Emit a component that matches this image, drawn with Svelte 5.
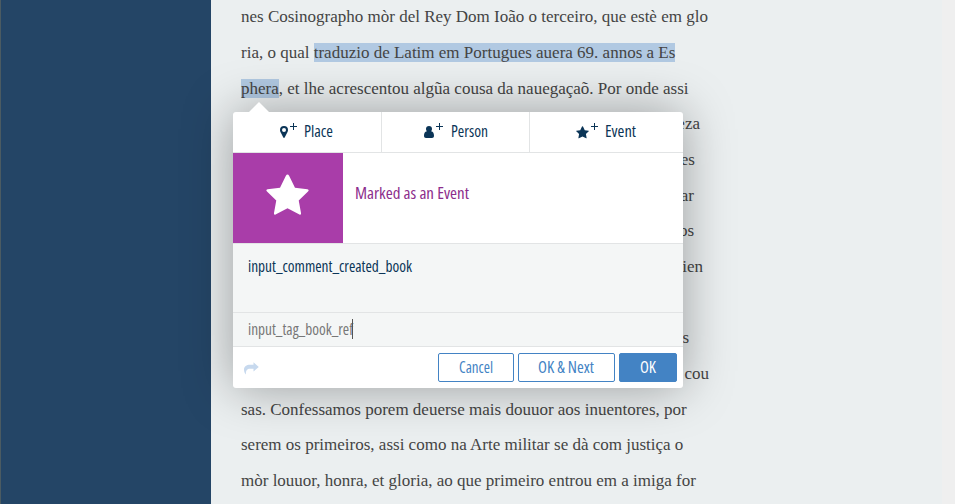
<script>
  const lines = [
    { text: 'nes Cosinographo mòr del Rey Dom Ioão o terceiro, que estè em glo' },
    { text: 'ria, o qual ', mark: 'traduzio de Latim em Portugues auera 69. annos a Es' },
    { mark: 'phera', after: ', et lhe acrescentou algũa cousa da nauegaçaõ. Por onde assi' },
    { end: 'eza', width: 459 },
    { end: 'es', width: 454 },
    { end: 'ar', width: 453 },
    { end: 'os', width: 453 },
    { end: 'ien', width: 462 },
    {},
    { end: 's', width: 448 },
    { end: 'cou', width: 468 },
    { text: 'sas. Confessamos porem deuerse mais douuor aos inuentores, por' },
    { text: 'serem os primeiros, assi como na Arte militar se dà com justiça o' },
    { text: 'mòr louuor, honra, et gloria, ao que primeiro entrou em a imiga for' }
  ];
  const star = 'M12 .3 Q12.500 .3 12.900 1 L16.200 7.700 L23.200 8.600 Q24.400 8.900 23.500 9.800 L18.300 14.900 L19.600 22 Q19.700 23.100 18.700 22.700 L12 19.200 L5.300 22.700 Q4.300 23.100 4.400 22 L5.700 14.900 L.5 9.800 Q-.4 8.900 .8 8.600 L7.800 7.700 L11.100 1 Q11.500 .3 12 .3 Z';
</script>

{#snippet label(text, width, size = 16, cls = '')}
  <svg class="label {cls}" width={width} height="22"><text x="0" y="16.4" font-size={size} textLength={width} lengthAdjust="spacingAndGlyphs">{text}</text></svg>
{/snippet}

{#snippet plus()}
  <svg class="plus" width="7" height="7" viewBox="0 0 7 7"><path d="M3.5 0V7M0 3.5H7" stroke="currentColor" stroke-width="1" /></svg>
{/snippet}

<main>
  <aside></aside>
  <article>
    {#each lines as l}
      <p>
        {#if l.end}<span class="end" style="width:{l.width}px">{l.end}</span>{:else}{l.text ?? ''}{#if l.mark}<mark>{l.mark}</mark>{/if}{l.after ?? ''}{/if}
      </p>
    {/each}
  </article>
  <div class="gutter"></div>

  <section class="popup">
    <svg class="arrow" width="22" height="11" viewBox="0 0 22 11"><path d="M0 11 L11 0 L22 11Z" fill="#fff" /></svg>
    <nav>
      <button class="place">
        <svg width="8" height="12" viewBox="0 0 8 12"><path fill="currentColor" fill-rule="evenodd" d="M4 0a4 4 0 0 1 4 4c0 1.200-.4 1.800-1 3L4.700 11.500a.8.8 0 0 1-1.400 0L1 7C.4 5.800 0 5.200 0 4a4 4 0 0 1 4-4Zm0 2a2 2 0 1 0 0 4a2 2 0 0 0 0-4Z" /></svg>
        {@render plus()}
        {@render label('Place', 29)}
      </button>
      <button class="person">
        <svg width="10" height="12" viewBox="0 0 10 12"><path fill="currentColor" d="M2 3a3 3 0 1 1 6 0a3 3 0 0 1-.9 2.200C9.300 5.500 10 7.500 10 9.800C10 11.200 9.200 12 8 12H2C.8 12 0 11.200 0 9.800C0 7.500.7 5.500 2.900 5.200A3 3 0 0 1 2 3Z" /></svg>
        {@render plus()}
        {@render label('Person', 37)}
      </button>
      <button class="event">
        <svg width="13" height="13" viewBox="0 0 24 24"><path d={star} fill="currentColor" /></svg>
        {@render plus()}
        {@render label('Event', 31)}
      </button>
    </nav>
    <header>
      <div class="badge">
        <svg width="43" height="41" viewBox="0 0 24 23"><path d={star} fill="#fff" /></svg>
      </div>
      {@render label('Marked as an Event', 114, 16.5)}
    </header>
    <div class="comment">{@render label('input_comment_created_book', 164, 15.5)}</div>
    <div class="tags">{@render label('input_tag_book_ref', 105, 15.5)}<i class="caret"></i></div>
    <footer>
      <svg class="share" width="15" height="13" viewBox="0 0 15 13"><path fill="currentColor" d="M9.500 0.300L14.800 5L9.500 9.500V6.700H6C3 6.700 1.800 8.300 1.900 12.500C.6 11 0 9.500 0 7.700C0 4.200 2.500 2.700 6 2.700H9.500Z" /></svg>
      <button class="btn cancel">{@render label('Cancel', 34, 15.5)}</button>
      <button class="btn next">{@render label('OK & Next', 56, 15.5)}</button>
      <button class="btn ok">{@render label('OK', 16, 15.5, 'strong')}</button>
    </footer>
  </section>
</main>

<style>
  main {
    position: relative;
    display: flex;
    width: 955px;
    height: 504px;
    overflow: hidden;
    background: #ebeff0;
    box-sizing: border-box;
  }
  aside {
    width: 210px;
    flex: none;
    background: #244566;
    border-left: 1px solid #4b5b62;
  }
  article {
    flex: 1;
    padding-left: 30px;
    margin-top: -0.65px;
    font-family: 'Liberation Serif', serif;
    font-size: 17px;
    line-height: 35.68px;
    color: #444;
    white-space: nowrap;
  }
  p { margin: 0; height: 35.68px; }
  .end { display: inline-block; text-align: right; }
  mark { background: #b1c9e2; color: inherit; }
  .gutter { width: 13px; background: #efefef; }

  .popup {
    position: absolute;
    left: 233px;
    top: 112px;
    width: 450px;
    height: 276px;
    display: flex;
    flex-direction: column;
    background: #fff;
    border-radius: 3px;
    box-shadow: 0 0 50px rgba(0, 0, 0, .35);
    color: #0b3557;
  }
  .arrow { position: absolute; left: 15px; top: -10px; }
  svg { display: block; flex: none; }
  .label { overflow: visible; font-family: 'Open Sans', 'Noto Sans', sans-serif; font-weight: 400; font-stretch: 75%; fill: currentColor; }
  .strong { font-weight: 500; }
  button { margin: 0; border: 0; background: none; color: inherit; padding: 0; box-sizing: border-box; }

  nav { display: flex; height: 40px; border-bottom: 1px solid #e2e4e5; }
  nav button { display: flex; align-items: center; }
  nav button + button { border-left: 1px solid #e2e4e5; }
  nav .label { margin-left: 7px; }
  .place { width: 148px; padding-left: 47px; }
  .person { width: 148px; padding-left: 42px; }
  .person .label { margin-left: 8px; }
  .event { flex: 1; padding-left: 46px; }
  .plus { margin: -11px 0 0 2px; }
  .place .plus { margin-left: 1.5px; }

  header { display: flex; align-items: center; height: 90px; border-bottom: 1px solid #e2e4e5; color: #8c2d8c; }
  .badge { display: flex; align-items: center; justify-content: center; width: 110px; height: 90px; background: #a93da9; padding: 0 1px 7px 0; box-sizing: border-box; margin-right: 12px; }
  header .label { margin-top: -8px; }
  .comment { height: 56px; padding: 12px 15px 0; background: #f4f6f6; border-bottom: 1px solid #e2e4e5; }
  .tags { display: flex; align-items: center; height: 33px; padding-left: 15px; background: #f4f6f6; border-bottom: 1px solid #e2e4e5; color: #777; }
  .caret { width: 1px; height: 20px; margin: -2px 0 0 -1px; background: #555; }
  footer { display: flex; align-items: center; flex: 1; padding: 0 6px 0 11px; gap: 4px; }
  .share { color: #c7d9ee; margin-right: auto; margin-top: 2px; }
  .btn { display: flex; align-items: center; justify-content: center; height: 29px; border: 1px solid #4383c4; border-radius: 2px; color: #4383c4; }
  .cancel { width: 76px; padding-right: 1px; }
  .next { width: 97px; padding-right: 1px; }
  .ok { width: 58px; background: #4383c4; color: #fff; }
</style>
